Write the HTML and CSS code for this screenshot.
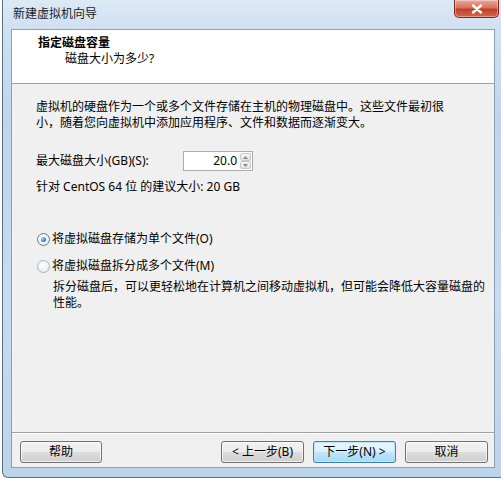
FILE: index.html
```html
<!DOCTYPE html>
<html lang="zh-CN">
<head>
<meta charset="utf-8">
<title>新建虚拟机向导</title>
<link rel="stylesheet" href="styles.css">
</head>
<body>
<div class="window">
  <div class="titlebar">
    <span class="title">新建虚拟机向导</span>
    <div class="close">
      <svg width="14" height="10" viewBox="0 0 14 10"><path d="M3 1.5 L11 8.5 M11 1.5 L3 8.5" stroke="#fff" stroke-width="2.4" stroke-linecap="round"/></svg>
    </div>
  </div>
  <div class="client">
    <div class="header">
      <div class="h-title">指定磁盘容量</div>
      <div class="h-sub">磁盘大小为多少?</div>
    </div>
    <div class="body">
      <p class="intro">虚拟机的硬盘作为一个或多个文件存储在主机的物理磁盘中。这些文件最初很小，随着您向虚拟机中添加应用程序、文件和数据而逐渐变大。</p>
      <div class="size-row">
        <span class="size-label">最大磁盘大小(GB)(S):</span>
        <div class="spin">
          <span class="spin-val">20.0</span>
          <div class="spin-btns">
            <div class="spin-btn"><svg width="5" height="3" viewBox="0 0 5 3"><path d="M0 3 L2.5 0 L5 3Z" fill="#8a8a8a"/></svg></div>
            <div class="spin-btn"><svg width="5" height="3" viewBox="0 0 5 3"><path d="M0 0 L2.5 3 L5 0Z" fill="#8a8a8a"/></svg></div>
          </div>
        </div>
      </div>
      <div class="rec">针对 CentOS 64 位 的建议大小: 20 GB</div>
      <div class="option first">
        <span class="radio checked"><span class="dot"></span></span>
        <span>将虚拟磁盘存储为单个文件(O)</span>
      </div>
      <div class="option second">
        <span class="radio"></span>
        <span>将虚拟磁盘拆分成多个文件(M)</span>
      </div>
      <p class="desc">拆分磁盘后，可以更轻松地在计算机之间移动虚拟机，但可能会降低大容量磁盘的性能。</p>
    </div>
    <div class="footer">
      <button class="btn">帮助</button>
      <div class="spacer"></div>
      <button class="btn">&lt; 上一步(B)</button>
      <button class="btn default">下一步(N) &gt;</button>
      <button class="btn">取消</button>
    </div>
  </div>
</div>
</body>
</html>
```
FILE: styles.css
```css
html, body {
  margin: 0;
  padding: 0;
  background: #ffffff;
  overflow: hidden;
}
body {
  width: 501px;
  height: 482px;
  font-family: "Noto Sans", "Noto Sans CJK SC", sans-serif;
  font-size: 12px;
  color: #000;
}
.window {
  position: relative;
  margin-left: 2px;
  width: 506px;
  height: 478px;
  box-sizing: border-box;
  border: 1px solid #5b6f86;
  border-top: none;
  border-radius: 0 0 6px 6px;
  background: linear-gradient(180deg, #dce9f6 0px, #cfe0f2 30px, #bfd5ee 120px, #c8dbf0 300px, #bcd3ec 478px);
  padding: 0 0 0 8px;
  display: flex;
  flex-direction: column;
}
.titlebar {
  position: relative;
  height: 29px;
  flex: none;
}
.title {
  position: absolute;
  left: 2px;
  top: 6px;
  line-height: 16px;
  font-size: 12px;
  color: #1c1c1c;
}
.close {
  position: absolute;
  left: 443px;
  top: 0;
  width: 45px;
  height: 18px;
  box-sizing: border-box;
  border: 1px solid #7a2a1e;
  border-top: none;
  border-radius: 0 0 5px 5px;
  background: linear-gradient(180deg, #e9a99c 0%, #d8705c 45%, #c2402a 55%, #d4674f 100%);
  box-shadow: inset 0 0 0 1px rgba(255,255,255,0.35);
  display: flex;
  align-items: center;
  justify-content: center;
}
.client {
  width: 484px;
  height: 439px;
  box-sizing: border-box;
  border: 1px solid #8d9fb6;
  background: #f0f0f0;
  display: flex;
  flex-direction: column;
}
.header {
  height: 54px;
  flex: none;
  box-sizing: border-box;
  background: #ffffff;
  border-bottom: 1px solid #a0a0a0;
  padding: 5px 0 0 26px;
}
.h-title {
  font-weight: bold;
  line-height: 16px;
}
.h-sub {
  line-height: 16px;
  padding-left: 27px;
}
.body {
  flex: 1;
  padding: 15px 0 0 24px;
}
.intro {
  margin: 0;
  width: 412px;
  line-height: 16px;
}
.size-row {
  display: flex;
  align-items: center;
  margin-top: 20px;
  height: 20px;
}
.size-label {
  width: 147px;
  line-height: 16px;
}
.spin {
  width: 70px;
  height: 20px;
  box-sizing: border-box;
  border: 1px solid #abadb3;
  background: #fff;
  display: flex;
  align-items: stretch;
}
.spin-val {
  flex: 1;
  text-align: right;
  line-height: 18px;
  padding-right: 3px;
  font-size: 12px;
}
.spin-btns {
  width: 11px;
  display: flex;
  flex-direction: column;
  padding: 1px 1px 1px 0;
}
.spin-btn {
  flex: 1;
  border: 1px solid #c9c9c9;
  border-radius: 2px;
  background: linear-gradient(180deg, #f6f6f6, #e2e2e2);
  display: flex;
  align-items: center;
  justify-content: center;
}
.rec {
  margin-top: 8px;
  line-height: 16px;
}
.option {
  display: flex;
  align-items: center;
  height: 16px;
  line-height: 16px;
}
.option.first {
  margin-top: 36px;
}
.option.second {
  margin-top: 11px;
}
.radio {
  width: 13px;
  height: 13px;
  box-sizing: border-box;
  border-radius: 50%;
  border: 1px solid #a8b3bf;
  background: radial-gradient(circle at 40% 35%, #ffffff 0%, #f0f0f0 60%, #dcdcdc 100%);
  margin-left: 1px;
  margin-right: 2px;
  display: flex;
  align-items: center;
  justify-content: center;
  flex: none;
}
.radio.checked {
  border-color: #5a7da0;
}
.dot {
  width: 5px;
  height: 5px;
  border-radius: 50%;
  background: radial-gradient(circle at 35% 35%, #a9dcff 0%, #2b7fd1 60%, #1a5aa0 100%);
}
.desc {
  margin: 5px 0 0 17px;
  width: 436px;
  line-height: 16px;
}
.footer {
  flex: none;
  height: 35px;
  box-sizing: border-box;
  border-top: 1px solid #a0a0a0;
  box-shadow: inset 0 1px 0 #ffffff;
  padding: 8px 6px 0 8px;
  display: flex;
  align-items: flex-start;
  gap: 9px;
}
.spacer {
  flex: 1;
}
.btn {
  width: 83px;
  height: 22px;
  box-sizing: border-box;
  border: 1px solid #707070;
  border-radius: 3px;
  background: linear-gradient(180deg, #f2f2f2 0%, #ebebeb 50%, #dddddd 51%, #cfcfcf 100%);
  box-shadow: inset 0 0 0 1px rgba(255,255,255,0.7);
  font-family: "Noto Sans", "Noto Sans CJK SC", sans-serif;
  font-size: 12px;
  color: #000;
  padding: 0;
  line-height: 18px;
}
.btn.default {
  border-color: #3c7fb1;
  background: linear-gradient(180deg, #eaf6fd 0%, #d9f0fc 50%, #bee6fd 51%, #a7d9f5 100%);
  box-shadow: inset 0 0 0 1px #bfe6fb;
}
.btn:first-child {
  width: 82px;
}
```
